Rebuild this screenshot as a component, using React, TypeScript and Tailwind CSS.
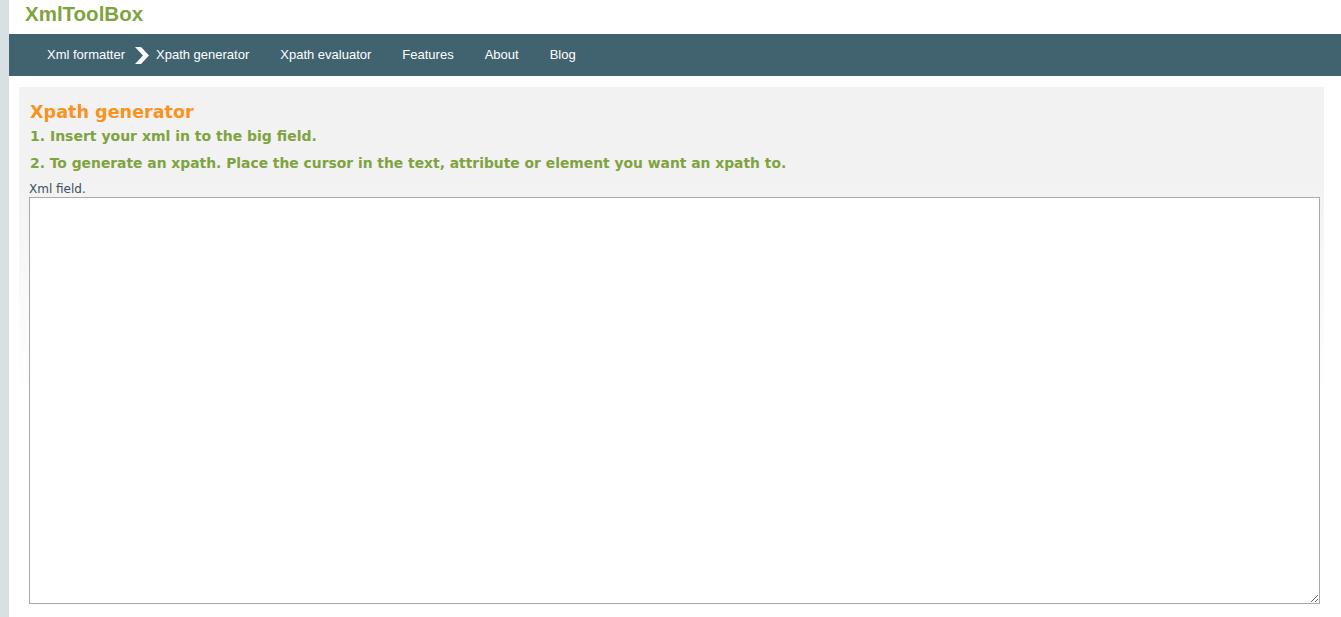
import React from 'react';

function Chevron() {
  return (
    <svg width="16" height="17" viewBox="0 0 16 17" className="ml-[9px] mr-[6px]">
      <polygon points="1,0 7,0 15,8.5 7,17 1,17 9,8.5" fill="#ffffff" />
    </svg>
  );
}

export default function App() {
  return (
    <div className="flex min-h-[617px] bg-white font-['Liberation_Sans',Arial,sans-serif]">
      {/* left strip */}
      <div className="w-[9px] shrink-0 bg-[#d8e0e4]" />

      <div className="flex-1 flex flex-col">
        {/* ── Header ─── */}
        <div className="h-[34px] pl-[16px] pt-[2px]">
          <span className="text-[20.5px] font-bold text-[#7fa33f] leading-[24px]">XmlToolBox</span>
        </div>

        {/* ── Nav ─── */}
        <nav className="h-[42px] bg-[#41636f] flex items-center pl-[38px] text-[13px] text-white">
          <a>Xml formatter</a>
          <Chevron />
          <a className="mr-[31px]">Xpath generator</a>
          <a className="mr-[31px]">Xpath evaluator</a>
          <a className="mr-[31px]">Features</a>
          <a className="mr-[31px]">About</a>
          <a>Blog</a>
        </nav>

        {/* ── Content panel ─── */}
        <div className="mt-[11px] ml-[10px] mr-[17px] flex-1 pl-[10px] pr-[4px] pt-[14px] pb-[14px] bg-[linear-gradient(to_bottom,#f2f2f2_90px,#ffffff_310px)] font-['DejaVu_Sans',Verdana,sans-serif]">
          <h1 className="pl-[1px] text-[17.6px] font-bold text-[#f7931e] leading-[22px]">Xpath generator</h1>
          <p className="pl-[1px] mt-[4px] text-[14px] font-bold text-[#7fa33f] leading-[18px]">1. Insert your xml in to the big field.</p>
          <p className="pl-[1px] mt-[9px] text-[13.87px] font-bold text-[#7fa33f] leading-[18px]">
            2. To generate an xpath. Place the cursor in the text, attribute or element you want an xpath to.
          </p>
          <label className="block mt-[10px] text-[12px] text-[#3b4f5e] leading-[15px]">Xml field.</label>
          <textarea
            className="block w-full h-[407px] border border-[#a9a9a9] bg-white outline-none"
            spellCheck={false}
          />
        </div>
      </div>
    </div>
  );
}
